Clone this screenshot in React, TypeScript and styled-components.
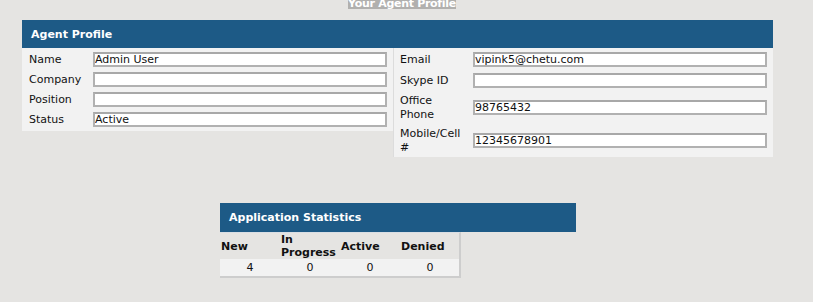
import React from 'react';
import styled, { createGlobalStyle } from 'styled-components';

const GlobalStyle = createGlobalStyle`
  body {
    margin: 0;
    background: #e5e4e2;
    font-family: "DejaVu Sans", Verdana, sans-serif;
    font-size: 11px;
    color: #111;
  }
`;

const Page = styled.div`
  width: 813px;
`;

const TitleRow = styled.div`
  display: flex;
  justify-content: center;
  padding-right: 9px;
`;

const Title = styled.div`
  height: 9px;
  overflow: hidden;
  background: #b1b0ae;
  color: #fff;
  font-weight: bold;
  line-height: 7px;
  letter-spacing: -0.3px;
  white-space: nowrap;
`;

const Section = styled.section<{ $width: number; $left: number; $top: number }>`
  width: ${(p) => p.$width}px;
  margin-left: ${(p) => p.$left}px;
  margin-top: ${(p) => p.$top}px;
`;

const SectionHeader = styled.div<{ $height: number }>`
  height: ${(p) => p.$height}px;
  background: #1d5a86;
  color: #fff;
  font-weight: bold;
  display: flex;
  align-items: center;
  padding-left: 9px;
  box-sizing: border-box;
`;

const ProfileBody = styled.div`
  display: flex;
  align-items: flex-start;
`;

const Panel = styled.div<{ $width: number; $divider?: boolean }>`
  width: ${(p) => p.$width}px;
  box-sizing: border-box;
  background: #f2f2f2;
  padding: 1px 6px ${(p) => (p.$divider ? 0 : 2)}px ${(p) => (p.$divider ? 6 : 7)}px;
  border-left: ${(p) => (p.$divider ? '1px solid #dcdcdc' : 'none')};
`;

const FieldRow = styled.div<{ $labelWidth: number; $tight?: boolean }>`
  display: grid;
  grid-template-columns: ${(p) => p.$labelWidth}px 294px;
  align-items: center;
  padding: 3px 0 ${(p) => (p.$tight ? 2 : 3)}px;
`;

const Label = styled.label`
  line-height: 13.5px;
  padding-right: 7px;
  color: #111;
`;

const TextInput = styled.input`
  box-sizing: border-box;
  width: 294px;
  height: 15px;
  margin: 0;
  padding: 0;
  border: 2px solid #b1b1b1;
  border-top-color: #a8a8a8;
  background: #fff;
  font-family: "DejaVu Sans", Verdana, sans-serif;
  font-size: 11px;
  color: #111;
  outline: none;
`;

const StatsTable = styled.div`
  width: 241px;
  box-sizing: border-box;
  border-top: 1px solid #d9dee4;
  border-right: 2px solid #cdcdcd;
  border-bottom: 2px solid #cdcdcd;
`;

const StatsRow = styled.div<{ $head?: boolean }>`
  display: grid;
  grid-template-columns: repeat(4, 60px);
  align-items: center;
  height: ${(p) => (p.$head ? 26 : 17)}px;
  background: ${(p) => (p.$head ? '#e5e4e2' : '#f2f2f2')};
`;

const HeadCell = styled.div`
  font-weight: bold;
  line-height: 13px;
  padding-left: 1px;
  color: #111;
`;

const DataCell = styled.div`
  text-align: center;
  color: #111;
`;

type Field = { label: string; value: string };

const leftFields: Field[] = [
  { label: 'Name', value: 'Admin User' },
  { label: 'Company', value: '' },
  { label: 'Position', value: '' },
  { label: 'Status', value: 'Active' },
];

const rightFields: Field[] = [
  { label: 'Email', value: 'vipink5@chetu.com' },
  { label: 'Skype ID', value: '' },
  { label: 'Office Phone', value: '98765432' },
  { label: 'Mobile/Cell #', value: '12345678901' },
];

const stats = [
  { name: 'New', count: 4 },
  { name: 'In Progress', count: 0 },
  { name: 'Active', count: 0 },
  { name: 'Denied', count: 0 },
];

export default function App() {
  return (
    <Page>
      <GlobalStyle />
      <TitleRow>
        <Title>Your Agent Profile</Title>
      </TitleRow>

      <Section $width={751} $left={22} $top={11}>
        <SectionHeader $height={28}>Agent Profile</SectionHeader>
        <ProfileBody>
          <Panel $width={371}>
            {leftFields.map((f) => (
              <FieldRow key={f.label} $labelWidth={64} $tight>
                <Label>{f.label}</Label>
                <TextInput defaultValue={f.value} />
              </FieldRow>
            ))}
          </Panel>
          <Panel $width={380} $divider>
            {rightFields.map((f) => (
              <FieldRow key={f.label} $labelWidth={73}>
                <Label>{f.label}</Label>
                <TextInput defaultValue={f.value} />
              </FieldRow>
            ))}
          </Panel>
        </ProfileBody>
      </Section>

      <Section $width={356} $left={220} $top={46}>
        <SectionHeader $height={29}>Application Statistics</SectionHeader>
        <StatsTable>
          <StatsRow $head>
            {stats.map((s) => (
              <HeadCell key={s.name}>{s.name}</HeadCell>
            ))}
          </StatsRow>
          <StatsRow>
            {stats.map((s) => (
              <DataCell key={s.name}>{s.count}</DataCell>
            ))}
          </StatsRow>
        </StatsTable>
      </Section>
    </Page>
  );
}
